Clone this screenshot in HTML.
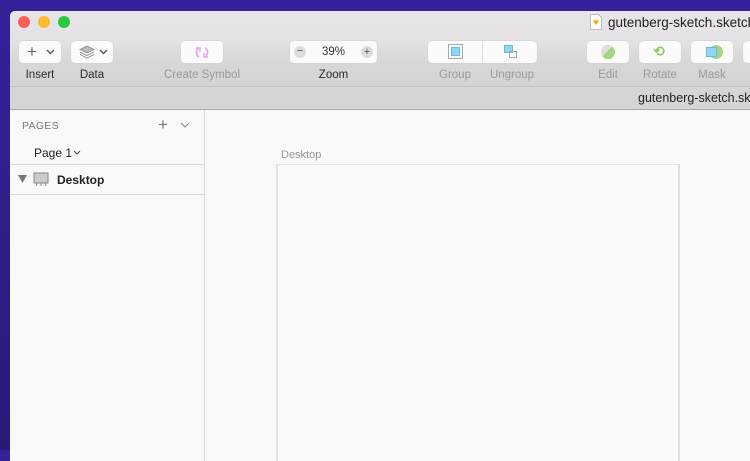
<!DOCTYPE html>
<html><head><style>
*{margin:0;padding:0;box-sizing:border-box}
body{width:750px;height:450px;overflow:hidden;background:linear-gradient(#36219a,#2a1a78);font-family:"Liberation Sans",sans-serif;position:relative}
.win{position:absolute;left:10px;top:11px;width:760px;height:450px;background:#f9f9f9;border-radius:5px 0 0 0;overflow:hidden}
.tb{position:absolute;left:0;top:0;width:100%;height:76px;background:linear-gradient(#e8e6e8 0,#e4e2e4 28px,#d6d6d6 55px,#d4d4d4 76px);border-bottom:1px solid #c4c4c4}
.tabs{position:absolute;left:0;top:76px;width:100%;height:23px;background:#d5d5d5;border-bottom:1px solid #a9a9a9}
.dot{position:absolute;top:5px;width:12px;height:12px;border-radius:50%}
.btn{position:absolute;top:30px;height:22px;background:#fbfbfb;border-radius:4px;box-shadow:0 0 0 .5px #cfcfcf}
.lbl{position:absolute;top:58px;font-size:11.5px;color:#2a2a2a;text-align:center;white-space:nowrap}
.dim{color:#9a9a9a}
.side{position:absolute;left:0;top:99px;width:195px;height:360px;background:#f9f9f9;border-right:1px solid #d8d8d8}
.art{position:absolute;left:268px;top:153px;width:400px;height:300px;background:#fafafa;border-top:1px solid #e6e6e6;box-shadow:-2px 0 0 #e2e2e2,2px 0 0 #dedede}
</style></head><body>
<div class="win">
<div class="tb">
<div class="dot" style="left:8px;background:#fc5f57"></div>
<div class="dot" style="left:28px;background:#fdbc2e"></div>
<div class="dot" style="left:48px;background:#29c840"></div>
<svg style="position:absolute;left:580px;top:3px" width="12" height="16"><path d="M.5 .5h8l3 3v12h-11z" fill="#fff" stroke="#bbb"/><path d="M3 7h6l-3 4z" fill="#f7a21b"/><path d="M3 7l1-1.5h4l1 1.5z" fill="#fdd231"/></svg>
<div style="position:absolute;left:598px;top:4px;font-size:13.5px;color:#222;white-space:nowrap">gutenberg-sketch.sketch</div>

<div class="btn" style="left:9px;width:42px"><span style="position:absolute;left:8px;top:1px;font-size:17px;color:#666;font-weight:300">+</span><svg style="position:absolute;left:27px;top:8px" width="9" height="6"><path d="M1 1l3.5 3.5L8 1" stroke="#555" fill="none" stroke-width="1.4"/></svg></div>
<div class="btn" style="left:61px;width:42px"><svg style="position:absolute;left:8px;top:4px" width="16" height="14"><path d="M8 1l7 3.5-7 3.5-7-3.5z" fill="#bbb" stroke="#888" stroke-width=".8"/><path d="M1 7l7 3.5 7-3.5M1 9.5l7 3.5 7-3.5" fill="none" stroke="#888" stroke-width=".8"/></svg><svg style="position:absolute;left:28px;top:8px" width="9" height="6"><path d="M1 1l3.5 3.5L8 1" stroke="#555" fill="none" stroke-width="1.4"/></svg></div>
<div class="btn" style="left:171px;width:42px"><svg style="position:absolute;left:13px;top:4px" width="16" height="15"><path d="M4 4a5 5 0 0 0 1 8M12 11a5 5 0 0 0-1-8" fill="none" stroke="#e3a3f0" stroke-width="1.6"/><path d="M2 3h4v4M14 12h-4v-4" fill="none" stroke="#e3a3f0" stroke-width="1.4"/></svg></div>
<div class="btn" style="left:280px;width:87px"><span style="position:absolute;left:4px;top:5px;width:12px;height:12px;border-radius:50%;background:#ddd;font-size:11px;line-height:11px;text-align:center;color:#555">−</span><span style="position:absolute;left:32px;top:5px;font-size:11.5px;color:#333">39%</span><span style="position:absolute;left:71px;top:5px;width:12px;height:12px;border-radius:50%;background:#ddd;font-size:11px;line-height:12px;text-align:center;color:#555">+</span></div>
<div class="btn" style="left:418px;width:109px"><div style="position:absolute;left:54px;top:0;width:1px;height:22px;background:#ddd"></div>
<div style="position:absolute;left:20px;top:3px;width:15px;height:15px;border:1px solid #aaa"></div><div style="position:absolute;left:23px;top:6px;width:9px;height:9px;background:#8fd6f5;border:1px solid #6bb8e0"></div>
<div style="position:absolute;left:76px;top:4px;width:9px;height:8px;background:#8fd6f5;border:1px solid #6bb8e0"></div><div style="position:absolute;left:81px;top:10px;width:8px;height:7px;border:1px solid #aaa"></div></div>
<div class="btn" style="left:577px;width:42px"><div style="position:absolute;left:14px;top:4px;width:14px;height:14px;border-radius:50%;background:linear-gradient(135deg,#ddd 45%,#a5d77c 46%)"></div></div>
<div class="btn" style="left:629px;width:42px"><span style="position:absolute;left:14px;top:2px;font-size:14px;color:#8fcf6b;font-weight:bold">⟲</span></div>
<div class="btn" style="left:681px;width:42px"><div style="position:absolute;left:18px;top:4px;width:14px;height:14px;border-radius:50%;background:#a5d77c"></div><div style="position:absolute;left:15px;top:6px;width:11px;height:10px;background:#8fd6f5;border:1px solid #6bb8e0"></div></div>
<div class="btn" style="left:733px;width:42px"></div>

<div class="lbl" style="left:9px;width:42px">Insert</div>
<div class="lbl" style="left:61px;width:42px">Data</div>
<div class="lbl dim" style="left:142px;width:100px">Create Symbol</div>
<div class="lbl" style="left:290px;width:67px">Zoom</div>
<div class="lbl dim" style="left:420px;width:50px">Group</div>
<div class="lbl dim" style="left:472px;width:60px">Ungroup</div>
<div class="lbl dim" style="left:577px;width:42px">Edit</div>
<div class="lbl dim" style="left:626px;width:48px">Rotate</div>
<div class="lbl dim" style="left:681px;width:42px">Mask</div>
</div>
<div class="tabs"><div style="position:absolute;left:628px;top:4px;font-size:12.5px;color:#222;white-space:nowrap">gutenberg-sketch.sketch</div></div>
<div class="side">
<div style="position:absolute;left:12px;top:10px;font-size:10.5px;color:#777;letter-spacing:.3px">PAGES</div>
<div style="position:absolute;left:148px;top:5px;font-size:17px;color:#777;font-weight:300">+</div>
<svg style="position:absolute;left:170px;top:12px" width="10" height="6"><path d="M1 1l4 4 4-4" stroke="#888" fill="none"/></svg>
<div style="position:absolute;left:24px;top:36px;font-size:12px;color:#222">Page 1</div>
<svg style="position:absolute;left:63px;top:40px" width="8" height="5"><path d="M1 1l3 3 3-3" stroke="#444" fill="none"/></svg>
<div style="position:absolute;left:0;top:54px;width:195px;height:1px;background:#d8d8d8"></div>
<svg style="position:absolute;left:8px;top:65px" width="9" height="8"><path d="M0 0h9l-4.5 8z" fill="#777"/></svg>
<svg style="position:absolute;left:23px;top:62px" width="16" height="15"><rect x="1" y="1" width="14" height="10" fill="#ccc" stroke="#888"/><path d="M4 11l-1 3M12 11l1 3M8 11v3" stroke="#888"/></svg>
<div style="position:absolute;left:47px;top:63px;font-size:12px;font-weight:bold;color:#222">Desktop</div>
<div style="position:absolute;left:0;top:84px;width:195px;height:1px;background:#d8d8d8"></div>
</div>
<div style="position:absolute;left:271px;top:138px;font-size:11px;color:#999">Desktop</div>
<div class="art"></div>
</div>
</body></html>
